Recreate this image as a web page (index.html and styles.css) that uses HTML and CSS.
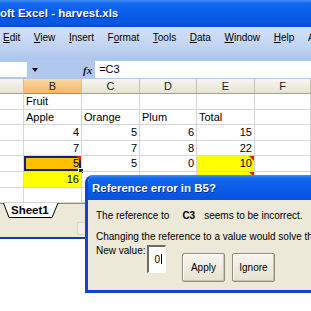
FILE: index.html
```html
<!DOCTYPE html>
<html lang="en">
<head>
    <meta charset="UTF-8">
    <title>Microsoft Excel - harvest.xls</title>
    <link rel="stylesheet" href="styles.css">
</head>
<body>
    <div class="excel">
        <div class="title-bar">oft Excel - harvest.xls</div>
        <div class="menu-bar">
            <span class="menu-item"><u>E</u>dit</span>
            <span class="menu-item"><u>V</u>iew</span>
            <span class="menu-item"><u>I</u>nsert</span>
            <span class="menu-item">F<u>o</u>rmat</span>
            <span class="menu-item"><u>T</u>ools</span>
            <span class="menu-item"><u>D</u>ata</span>
            <span class="menu-item"><u>W</u>indow</span>
            <span class="menu-item"><u>H</u>elp</span>
            <span class="menu-item">A</span>
        </div>
        <div class="toolbar"></div>
        <div class="formula-bar">
            <div class="name-box"></div>
            <span class="name-arrow"></span>
            <span class="fx">fx</span>
            <div class="formula-input">=C3</div>
        </div>

        <div class="sheet">
            <div class="hd"></div>
            <div class="hd hd-on">B</div>
            <div class="hd">C</div>
            <div class="hd">D</div>
            <div class="hd">E</div>
            <div class="hd">F</div>

            <div class="cell"></div>
            <div class="cell">Fruit</div>
            <div class="cell"></div>
            <div class="cell"></div>
            <div class="cell"></div>
            <div class="cell"></div>

            <div class="cell"></div>
            <div class="cell">Apple</div>
            <div class="cell">Orange</div>
            <div class="cell">Plum</div>
            <div class="cell">Total</div>
            <div class="cell"></div>

            <div class="cell"></div>
            <div class="cell num">4</div>
            <div class="cell num">5</div>
            <div class="cell num">6</div>
            <div class="cell num">15</div>
            <div class="cell"></div>

            <div class="cell"></div>
            <div class="cell num">7</div>
            <div class="cell num">7</div>
            <div class="cell num">8</div>
            <div class="cell num">22</div>
            <div class="cell"></div>

            <div class="cell"></div>
            <div class="cell num sel flag">5</div>
            <div class="cell num">5</div>
            <div class="cell num">0</div>
            <div class="cell num hi flag">10</div>
            <div class="cell"></div>

            <div class="cell"></div>
            <div class="cell num hi">16</div>
            <div class="cell num">17</div>
            <div class="cell num">14</div>
            <div class="cell num hi flag">47</div>
            <div class="cell"></div>

            <div class="cell"></div>
            <div class="cell"></div>
            <div class="cell"></div>
            <div class="cell"></div>
            <div class="cell"></div>
            <div class="cell"></div>
        </div>

        <div class="tab-bar">
            <div class="sheet-tab">
                <svg class="tab-shape" width="56" height="16" viewBox="0 0 56 16">
                    <path d="M0.5 0 L6 14.5 L49 14.5 L55 0" fill="#fff" stroke="#000" stroke-width="1"/>
                </svg>
                <span class="tab-label">Sheet1</span>
            </div>
        </div>
        <div class="status-bar">
            <div class="status-box"></div>
        </div>
    </div>

    <div class="dialog">
        <div class="dialog-title">Reference error in B5?</div>
        <div class="dialog-body">
            <div class="dialog-line">
                The reference to<b class="ref">C3</b><span class="after-ref">seems to be incorrect.</span>
            </div>
            <div class="dialog-line second">Changing the reference to a value would solve this problem.</div>
            <div class="dialog-row">
                <span class="new-label">New value:</span>
                <div class="value-box">0<span class="caret"></span></div>
                <button class="xp-button apply">Apply</button>
                <button class="xp-button">Ignore</button>
            </div>
        </div>
    </div>
</body>
</html>
```

FILE: styles.css
```css
body {
    margin: 0;
    width: 311px;
    height: 311px;
    overflow: hidden;
    position: relative;
    background: #fff;
    font-family: "Liberation Sans", Arial, sans-serif;
    color: #000;
}
.excel {
    width: 311px;
    border-bottom: 2px solid #0b3fb8;
}
.title-bar {
    height: 27px;
    line-height: 27px;
    font-size: 11.5px;
    font-weight: bold;
    color: #fff;
    white-space: nowrap;
    text-shadow: 1px 1px 0 #0c2c8c;
    background: linear-gradient(#4490f6 0%, #1268ee 12%, #085de9 50%, #0657e2 85%, #0b4bc9 100%);
}
.menu-bar {
    height: 20px;
    display: flex;
    align-items: center;
    gap: 13.6px;
    padding-left: 3px;
    font-size: 10px;
    white-space: nowrap;
    background: linear-gradient(#d3e1f7, #c1d3f1);
}
.menu-item u {
    text-decoration-thickness: 1px;
    text-underline-offset: 1px;
}
.toolbar {
    height: 13px;
    background: linear-gradient(#bfd2f1, #adc5ed);
}
.formula-bar {
    height: 19px;
    display: flex;
    align-items: center;
    background: #b1c8ee;
}
.name-box {
    width: 27px;
    height: 15px;
    background: #fff;
}
.name-arrow {
    width: 0;
    height: 0;
    margin-left: 5px;
    margin-top: 1px;
    border-left: 3px solid transparent;
    border-right: 3px solid transparent;
    border-top: 4px solid #000;
}
.fx {
    margin-left: 45px;
    font-family: "Liberation Serif", serif;
    font-style: italic;
    font-weight: bold;
    font-size: 11px;
    color: #1a1a1a;
}
.formula-input {
    flex: 1;
    height: 17px;
    margin-left: 3px;
    padding-left: 4px;
    background: #fff;
    font-size: 11px;
    line-height: 17px;
}

/* grid */
.sheet {
    display: grid;
    grid-template-columns: 24px 58px 58px 57px 58px 1fr;
    grid-template-rows: 15px repeat(7, 15.6px);
    font-size: 11px;
}
.hd {
    box-sizing: border-box;
    text-align: center;
    line-height: 14px;
    color: #222;
    background: linear-gradient(#f7f6f0, #e6e3d3);
    border-right: 1px solid #c5c2b2;
    border-bottom: 1px solid #a5a18c;
}
.hd-on {
    background: linear-gradient(#fbd9a4, #f6b865);
    border-bottom-color: #c98a3a;
}
.cell {
    position: relative;
    box-sizing: border-box;
    padding: 0 2px;
    line-height: 15px;
    white-space: nowrap;
    border-right: 1px solid #d6d6d6;
    border-bottom: 1px solid #d6d6d6;
}
.num {
    text-align: right;
}
.hi {
    background: #ffff00;
}
.sel {
    background: #ffc000;
    box-shadow: inset 0 0 0 2px #13236e;
}
.sel::before {
    content: "";
    position: absolute;
    right: -3px;
    bottom: -3px;
    width: 4px;
    height: 4px;
    background: #13236e;
    border: 1px solid #fff;
}
.flag::after {
    content: "";
    position: absolute;
    top: 0;
    right: 0;
    border-top: 5px solid #e02000;
    border-left: 5px solid transparent;
}

/* sheet tabs */
.tab-bar {
    height: 15px;
    background: #ece9d8;
    border-top: 1px solid #8c8a7e;
    display: flex;
}
.sheet-tab {
    position: relative;
    width: 56px;
    height: 15px;
    margin-left: 3px;
    margin-top: -1px;
}
.tab-shape {
    position: absolute;
    top: 0;
    left: 0;
}
.tab-label {
    position: relative;
    display: block;
    padding-left: 8px;
    font-size: 11.5px;
    font-weight: bold;
    line-height: 14px;
}
.status-bar {
    height: 18px;
    background: #ece9d8;
    display: flex;
    align-items: center;
}
.status-box {
    width: 8px;
    height: 11px;
    margin-left: 77px;
    border: 1px solid #d8d4c2;
    background: #f3f1e6;
}

/* dialog */
.dialog {
    position: absolute;
    left: 85px;
    top: 175px;
    width: 260px;
    border: 3px solid #0c44d4;
    border-top: 0;
    border-radius: 8px 8px 0 0;
    background: #ece9d8;
    overflow: hidden;
}
.dialog-title {
    height: 25px;
    line-height: 26px;
    margin: 0 -3px;
    padding-left: 7px;
    font-size: 11.5px;
    font-weight: bold;
    color: #fff;
    text-shadow: 1px 1px 0 #0c2c8c;
    background: linear-gradient(#4490f6 0%, #1268ee 14%, #085de9 55%, #0653de 100%);
}
.dialog-body {
    padding: 9px 0 8px 8px;
    font-size: 10px;
}
.dialog-line {
    height: 14px;
    line-height: 14px;
    white-space: nowrap;
}
.dialog-line.second {
    margin-top: 7px;
}
.ref {
    margin-left: 13px;
}
.after-ref {
    margin-left: 9px;
}
.dialog-row {
    display: flex;
    align-items: flex-start;
    margin-top: 1px;
}
.new-label {
    line-height: 12px;
}
.value-box {
    box-sizing: border-box;
    width: 19px;
    height: 28px;
    margin-left: 1.5px;
    padding-right: 3px;
    background: #fff;
    border-top: 2px solid #6f6d64;
    border-left: 2px solid #6f6d64;
    border-right: 1px solid #fff;
    border-bottom: 1px solid #fff;
    text-align: right;
    line-height: 25px;
    font-size: 10px;
}
.caret {
    display: inline-block;
    width: 1px;
    height: 10px;
    margin-left: 1px;
    vertical-align: -1px;
    background: #000;
}
.xp-button {
    width: 43px;
    height: 29px;
    margin-top: 8px;
    margin-left: 16px;
    padding: 0;
    font-family: "Liberation Sans", Arial, sans-serif;
    font-size: 10px;
    color: #000;
    background: linear-gradient(#f6f5f0, #e6e2d2);
    border: 1px solid #8e8b7c;
    border-radius: 2px;
    box-shadow: inset -1px -1px 0 #c9c5b2, inset 1px 1px 0 #fff;
}
.xp-button + .xp-button {
    margin-left: 7px;
}
```
